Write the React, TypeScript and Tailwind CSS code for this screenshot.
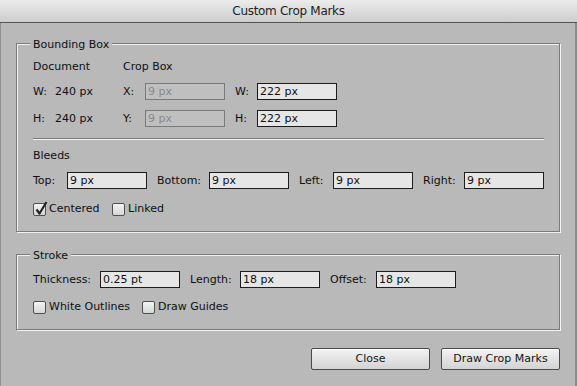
import React from 'react';

const Field = ({ value, disabled = false }: { value: string; disabled?: boolean }) => (
  <div
    className={`flex h-[17px] w-[80px] items-center border pl-[2px] leading-none ${
      disabled ? 'border-[#7a7a7a] bg-[#bfbfbf] text-[#8a8a8a]' : 'border-[#1c1c1c] bg-[#e6e6e6] text-[#111]'
    }`}
  >
    {value}
  </div>
);

const Check = ({ label, checked = false, width }: { label: string; checked?: boolean; width: string }) => (
  <div className={`flex h-[14px] items-center gap-[3px] ${width}`}>
    <div className="relative h-[13px] w-[13px] shrink-0 rounded-[2px] border border-[#4f4f4f] bg-gradient-to-b from-[#f4f4f4] to-[#d6d6d6]">
      {checked && (
        <svg className="absolute -top-[3px] left-[1px]" width="13" height="15" viewBox="0 0 13 15">
          <path d="M1.5 8.5 L4.5 12.5 L11.5 1" fill="none" stroke="#262626" strokeWidth="2.2" strokeLinejoin="round" />
        </svg>
      )}
    </div>
    <span className="leading-[14px]">{label}</span>
  </div>
);

const Label = ({ text, width }: { text: string; width: string }) => (
  <span className={`shrink-0 leading-[14px] ${width}`}>{text}</span>
);

const Group = ({ title, children, className = '' }: { title: string; children: React.ReactNode; className?: string }) => (
  <div
    className={`ml-[16px] flex w-[544px] flex-col border border-[#7b7b7b] shadow-[inset_1px_1px_0_#f2f2f2,1px_1px_0_#f2f2f2] ${className}`}
  >
    <div className="-mt-[6px] ml-[13px] self-start bg-[#b9b9b9] px-[3px] leading-[14px]">{title}</div>
    {children}
  </div>
);

export default function App() {
  return (
    <div className="flex h-[386px] w-[577px] flex-col bg-[#b9b9b9] font-['DejaVu_Sans',sans-serif] text-[11px] text-[#0f0f0f] shadow-[inset_1px_0_0_#909090,inset_-2px_0_0_#8a8a8a]">
      {/* title bar */}
      <div className="flex h-[23px] shrink-0 items-center justify-center border-b border-[#555] bg-gradient-to-b from-[#ececec] to-[#cdcdcd] text-[12px] tracking-[-0.3px] text-[#222]">
        Custom Crop Marks
      </div>

      <Group title="Bounding Box" className="mt-[20px] pb-[15px]">
        <div className="mt-[8px] flex h-[14px] pl-[16px]">
          <Label text="Document" width="w-[90px]" />
          <Label text="Crop Box" width="w-[80px]" />
        </div>

        <div className="mt-[9px] flex h-[17px] items-center pl-[16px]">
          <Label text="W:" width="w-[22px]" />
          <Label text="240 px" width="w-[68px]" />
          <Label text="X:" width="w-[22px]" />
          <Field value="9 px" disabled />
          <Label text="W:" width="ml-[10px] w-[22px]" />
          <Field value="222 px" />
        </div>

        <div className="mt-[10px] flex h-[17px] items-center pl-[16px]">
          <Label text="H:" width="w-[22px]" />
          <Label text="240 px" width="w-[68px]" />
          <Label text="Y:" width="w-[22px]" />
          <Field value="9 px" disabled />
          <Label text="H:" width="ml-[10px] w-[22px]" />
          <Field value="222 px" />
        </div>

        <div className="mt-[11px] ml-[16px] mr-[15px] h-[2px] border-t border-b border-t-[#7b7b7b] border-b-[#f2f2f2]" />

        <div className="mt-[9px] pl-[16px] leading-[14px]">Bleeds</div>

        <div className="mt-[9px] flex h-[17px] items-center pl-[16px]">
          <Label text="Top:" width="w-[34px]" />
          <Field value="9 px" />
          <Label text="Bottom:" width="ml-[10px] w-[52px]" />
          <Field value="9 px" />
          <Label text="Left:" width="ml-[10px] w-[34px]" />
          <Field value="9 px" />
          <Label text="Right:" width="ml-[10px] w-[41px]" />
          <Field value="9 px" />
        </div>

        <div className="mt-[13px] flex pl-[16px]">
          <Check label="Centered" checked width="w-[79px]" />
          <Check label="Linked" width="w-[80px]" />
        </div>
      </Group>

      <Group title="Stroke" className="mt-[22px] pb-[15px]">
        <div className="mt-[8px] flex h-[17px] items-center pl-[16px]">
          <Label text="Thickness:" width="w-[67px]" />
          <Field value="0.25 pt" />
          <Label text="Length:" width="ml-[10px] w-[50px]" />
          <Field value="18 px" />
          <Label text="Offset:" width="ml-[10px] w-[46px]" />
          <Field value="18 px" />
        </div>

        <div className="mt-[12px] flex pl-[16px]">
          <Check label="White Outlines" width="w-[109px]" />
          <Check label="Draw Guides" width="w-[100px]" />
        </div>
      </Group>

      <div className="mt-[18px] flex justify-end gap-[11px] pr-[17px]">
        <button className="h-[22px] w-[119px] rounded-[2px] border border-[#4a4a4a] bg-gradient-to-b from-[#f3f3f3] to-[#d3d3d3] text-[11px] text-[#141414] shadow-[inset_0_1px_0_#fff]">
          Close
        </button>
        <button className="h-[22px] w-[119px] rounded-[2px] border border-[#4a4a4a] bg-gradient-to-b from-[#f3f3f3] to-[#d3d3d3] text-[11px] text-[#141414] shadow-[inset_0_1px_0_#fff]">
          Draw Crop Marks
        </button>
      </div>
    </div>
  );
}
